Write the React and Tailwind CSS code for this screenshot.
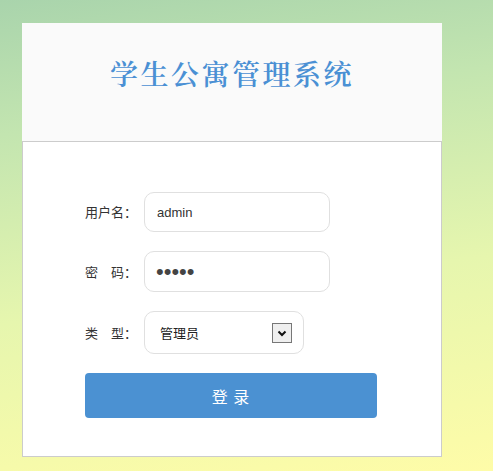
export default function App() {
  return (
    <div className="min-h-[471px] w-full bg-[linear-gradient(172deg,#a9d4ac_0%,#c3e5b0_25%,#e6f6ae_60%,#fefca8_100%)] pt-[23px] font-['Noto_Sans_CJK_SC',sans-serif]">
      <div className="ml-[22px] w-[420px]">
        <div className="h-[118px] bg-[#fafafa] pt-[32px] text-center">
          <h1 className="text-[28px] font-semibold leading-[36px] tracking-[2.5px] text-[#4a90d4] font-['Noto_Serif_CJK_SC','Noto_Sans_CJK_SC',serif]">
            学生公寓管理系统
          </h1>
        </div>
        <div className="h-[316px] border border-[#cccccc] bg-white pl-[62px] pt-[50px]">
          <div className="flex items-center">
            <label className="w-[59px] text-[13px] text-[#333]">用户名：</label>
            <input
              type="text"
              defaultValue="admin"
              className="h-[40px] w-[186px] rounded-[10px] border border-[#e0e0e0] pl-[12px] text-[13px] text-[#333] outline-none font-['Liberation_Sans','Noto_Sans_CJK_SC',sans-serif]"
            />
          </div>
          <div className="mt-[19px] flex items-center">
            <label className="w-[59px] whitespace-pre text-[13px] text-[#333]">密　码：</label>
            <input
              type="password"
              defaultValue="12345"
              className="h-[41px] w-[186px] rounded-[10px] border border-[#e0e0e0] pl-[11px] text-[22px] text-[#444] outline-none font-['Liberation_Sans',sans-serif]"
            />
          </div>
          <div className="mt-[19px] flex items-center">
            <label className="w-[59px] whitespace-pre text-[13px] text-[#333]">类　型：</label>
            <div className="relative">
              <select className="h-[43px] w-[160px] appearance-none rounded-[10px] border border-[#e0e0e0] bg-white pl-[15px] text-[13px] text-[#222] outline-none">
                <option>管理员</option>
                <option>学生</option>
              </select>
              <span className="pointer-events-none absolute right-[12px] top-[12px] flex h-[20px] w-[20px] items-center justify-center border border-[#777] bg-[#efefef]">
                <svg width="12" height="12" viewBox="0 0 12 12">
                  <path d="M2.5 4.5 L6 8 L9.5 4.5" fill="none" stroke="#111" strokeWidth="2" />
                </svg>
              </span>
            </div>
          </div>
          <button className="mt-[19px] h-[45px] w-[292px] rounded-[4px] bg-[#4b91d2] text-[16px] tracking-[1px] text-white">
            登 录
          </button>
        </div>
      </div>
    </div>
  );
}
